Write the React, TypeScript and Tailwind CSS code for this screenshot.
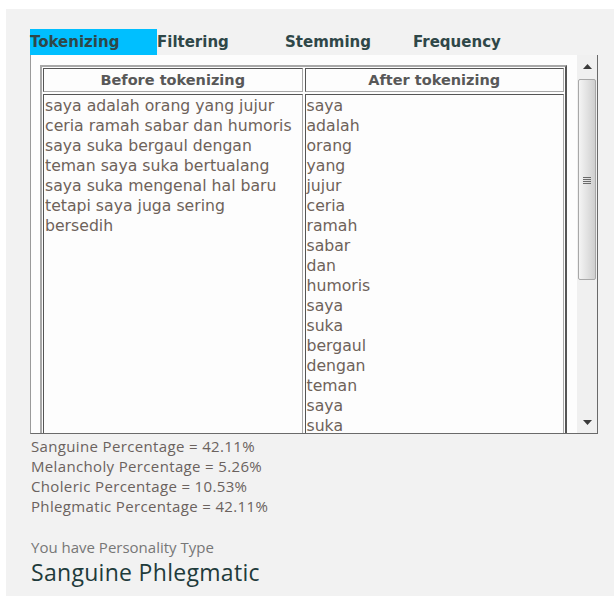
const before = [
  'saya adalah orang yang jujur',
  'ceria ramah sabar dan humoris',
  'saya suka bergaul dengan',
  'teman saya suka bertualang',
  'saya suka mengenal hal baru',
  'tetapi saya juga sering',
  'bersedih',
]

const tokens = before.join(' ').split(' ')

const tabs = ['Tokenizing', 'Filtering', 'Stemming', 'Frequency']

const scores = [
  ['Sanguine', '42.11'],
  ['Melancholy', '5.26'],
  ['Choleric', '10.53'],
  ['Phlegmatic', '42.11'],
]

function ScrollBar() {
  return (
    <div className="flex w-[20px] flex-col items-center bg-[#f0f0f0]">
      <div className="flex h-[22px] w-full items-center justify-center">
        <svg width="9" height="5" viewBox="0 0 9 5">
          <path d="M0 5 L4.5 0 L9 5 Z" fill="#3a3a3a" />
        </svg>
      </div>
      <div className="mt-[2px] flex h-[201px] w-[18px] items-center justify-center rounded-[2px] border border-[#a8a8a8] bg-gradient-to-r from-[#f4f4f4] via-[#e2e2e2] to-[#cfcfcf]">
        <svg width="8" height="8" viewBox="0 0 8 8">
          <path d="M0 1.5h8M0 3.5h8M0 5.5h8M0 7.5h8" stroke="#6a6a6a" strokeWidth="1" />
        </svg>
      </div>
      <div className="flex-1" />
      <div className="flex h-[22px] w-full items-center justify-center">
        <svg width="9" height="5" viewBox="0 0 9 5">
          <path d="M0 0 L4.5 5 L9 0 Z" fill="#3a3a3a" />
        </svg>
      </div>
    </div>
  )
}

export default function App() {
  return (
    <div className="min-h-[596px] bg-white pl-[6px] pt-[9px]">
      <div className="h-[587px] bg-[#f2f2f2] pl-[24px] pt-[20px]">
        {/* tab strip */}
        <div className="flex h-[26px] font-['DejaVu_Sans',sans-serif] text-[15px] font-bold text-[#2f4748]">
          {tabs.map((t, i) => (
            <div
              key={t}
              className={
                i === 0
                  ? 'flex w-[127px] items-center bg-[#00bfff]'
                  : 'flex w-[128px] items-center'
              }
            >
              {t}
            </div>
          ))}
        </div>

        {/* tab content with scroll pane */}
        <div className="flex h-[379px] w-[568px] border-b border-l border-r border-b-[#6a6a6a] border-l-[#9a9a9a] border-r-[#6a6a6a] bg-[#fdfdfd]">
          <div className="flex-1 overflow-hidden pl-[9px] pt-[10px] pr-[10px]">
            <div className="border-2 border-b-[#555] border-l-[#a8a8a8] border-r-[#555] border-t-[#a8a8a8] p-[1px] font-['DejaVu_Sans',sans-serif]">
              <div className="grid grid-cols-2 gap-[2px]">
                <div className="flex h-[24px] items-center justify-center border border-b-[#a8a8a8] border-l-[#555] border-r-[#a8a8a8] border-t-[#555] pt-[1px] text-[14.5px] font-bold text-[#585858]">
                  Before tokenizing
                </div>
                <div className="flex h-[24px] items-center justify-center border border-b-[#a8a8a8] border-l-[#555] border-r-[#a8a8a8] border-t-[#555] pt-[1px] text-[14.5px] font-bold text-[#585858]">
                  After tokenizing
                </div>
                <div className="h-[600px] border border-b-[#a8a8a8] border-l-[#555] border-r-[#a8a8a8] border-t-[#555] px-[1px] pt-[1px] text-[15.7px] leading-[20px] text-[#6e625a]">
                  {before.map((l) => (
                    <div key={l}>{l}</div>
                  ))}
                </div>
                <div className="h-[600px] border border-b-[#a8a8a8] border-l-[#555] border-r-[#a8a8a8] border-t-[#555] px-[1px] pt-[3px] text-[15.7px] leading-[20px] text-[#6e625a]">
                  {tokens.map((w, i) => (
                    <div key={i} className={i === 0 ? '-mt-[2px]' : ''}>
                      {w}
                    </div>
                  ))}
                </div>
              </div>
            </div>
          </div>
          <ScrollBar />
        </div>

        {/* results */}
        <div className="pt-[2px] pl-[1px] font-['Open_Sans',sans-serif] text-[15px] leading-[20px] tracking-[0.35px] text-[#6b625e]">
          {scores.map(([name, val]) => (
            <div key={name}>
              {name} Percentage = {val}%
            </div>
          ))}
        </div>
        <div className="mt-[21px] pl-[1px] font-['Open_Sans',sans-serif] text-[15px] leading-[20px] text-[#777]">
          You have Personality Type
        </div>
        <div className="mt-[1px] pl-[1px] font-['Open_Sans',sans-serif] text-[23px] leading-[28px] tracking-[0.3px] text-[#1f3b3b]">
          Sanguine Phlegmatic
        </div>
      </div>
    </div>
  )
}
